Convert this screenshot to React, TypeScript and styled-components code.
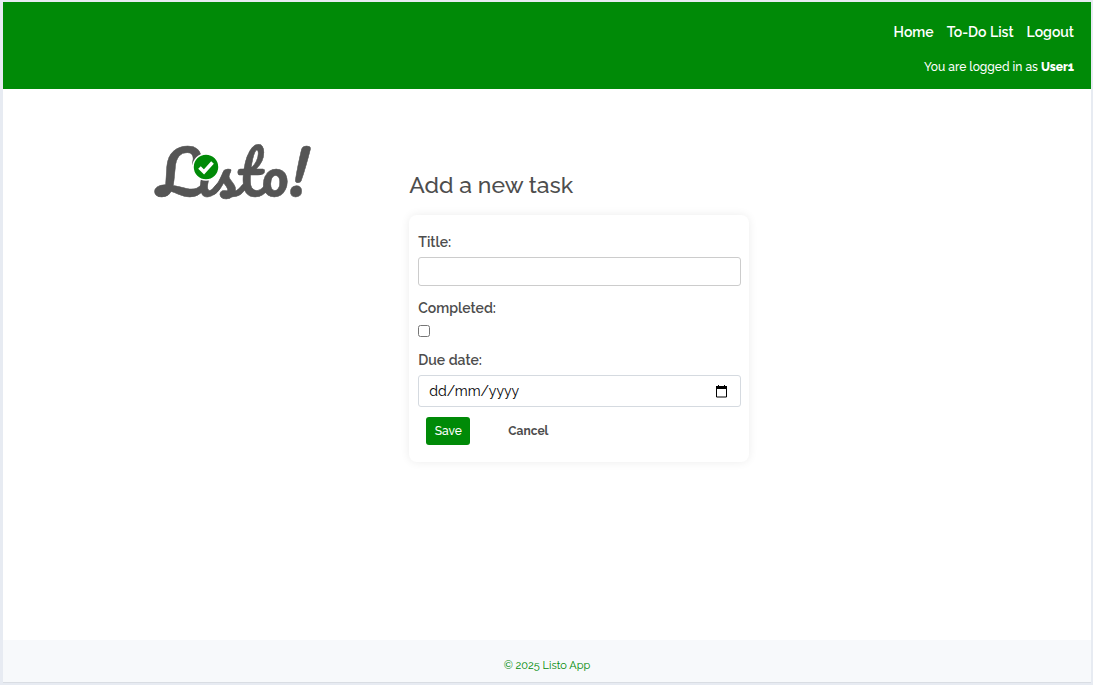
import React from "react";
import styled, { createGlobalStyle } from "styled-components";

const green = "#008a07";
const ink = "#4d4d4d";

const GlobalStyle = createGlobalStyle`
  * { box-sizing: border-box; }
  body {
    margin: 0;
    background: #e7ebf2;
    color: ${ink};
    font: 14px/20px Raleway, Lato, sans-serif;
  }
`;

const Page = styled.div`
  display: flex;
  flex-direction: column;
  min-height: 100vh;
  border: 2px solid #e7ebf2;
  border-left-width: 3px;
  background: #fff;
`;

const Header = styled.header`
  display: flex;
  flex-direction: column;
  align-items: flex-end;
  gap: 17px;
  padding: 20px 17px 13px;
  background: ${green};
  color: #fff;
`;

const Nav = styled.nav`
  display: flex;
  gap: 13px;
`;

const NavLink = styled.a`
  color: #fff;
  font-size: 14px;
  font-weight: 600;
  text-decoration: none;
`;

const Status = styled.p`
  margin: 0;
  font-size: 12px;
  line-height: 17px;
  font-weight: 500;

  b { font-weight: 800; }
`;

const Main = styled.main`
  flex: 1;
  display: grid;
  grid-template-columns: 254px minmax(0, 340px);
  align-items: start;
  padding: 52px 14%;
`;

const Logo = styled.svg`
  display: block;
  width: 170px;
  height: 72px;
  overflow: visible;
`;

const Wordmark = styled.text`
  fill: #555;
  stroke: #555;
  stroke-width: 0.5;
  font: 400 60px Pacifico, Lobster, "Dancing Script", cursive;
`;

const Content = styled.section`
  padding-top: 28px;
`;

const Heading = styled.h1`
  margin: 0 0 14px;
  font-size: 23px;
  line-height: 32px;
  font-weight: 500;
`;

const Card = styled.form`
  padding: 17px 8px 17px 9px;
  border-radius: 8px;
  box-shadow: 0 0 10px rgba(0, 0, 0, 0.08);
`;

const Fields = styled.div`
  display: flex;
  flex-direction: column;
  gap: 12px;
  margin-bottom: 10px;
`;

const Field = styled.div`
  display: flex;
  flex-direction: column;
  align-items: flex-start;
  gap: 5px;
`;

const Label = styled.label`
  font-size: 14px;
  line-height: 20px;
  font-weight: 600;
`;

const TextInput = styled.input`
  width: 100%;
  height: 29px;
  padding: 0 10px;
  border: 1px solid #ccc;
  border-radius: 3px;
  background: #fff;
  font: inherit;
`;

const Checkbox = styled.input`
  width: 12px;
  height: 12px;
  margin: 2px 0 1px;
`;

const DateBox = styled.div`
  display: flex;
  align-items: center;
  width: 100%;
  height: 32px;
  padding: 0 12px 0 10px;
  border: 1px solid #d5dae0;
  border-radius: 3px;
`;

const DateInput = styled.input`
  flex: 1;
  min-width: 0;
  padding: 0;
  border: 0;
  outline: 0;
  background: none;
  font: inherit;
  color: #000;
  &::placeholder { color: #000; opacity: 1; }
`;

const PickerButton = styled.button`
  display: flex;
  padding: 0;
  border: 0;
  background: none;
`;

const Actions = styled.div`
  display: flex;
  align-items: center;
  gap: 38px;
  padding: 0 8px;
`;

const SaveButton = styled.button`
  min-width: 44px;
  height: 28px;
  padding: 0 8px;
  border: 0;
  border-radius: 3px;
  background: ${green};
  color: #fff;
  font: inherit;
  font-size: 12px;
  font-weight: 500;
`;

const CancelLink = styled.a`
  color: ${ink};
  font-size: 12px;
  font-weight: 700;
  text-decoration: none;
`;

const Footer = styled.footer`
  padding: 17px 16px 7px;
  background: #f7f9fb;
  border-bottom: 1px solid #d9dde3;
  color: ${green};
  font-size: 11px;
  line-height: 18px;
  text-align: center;
`;

export default function App() {
  return (
    <>
      <GlobalStyle />
      <Page>
        <Header>
          <Nav>
            <NavLink href="#home">Home</NavLink>
            <NavLink href="#tasks">To-Do List</NavLink>
            <NavLink href="#logout">Logout</NavLink>
          </Nav>
          <Status>You are logged in as <b>User1</b></Status>
        </Header>
        <Main>
          <Logo viewBox="0 0 170 72" role="img" aria-label="Listo!">
            <Wordmark x="2" y="56">Listo!</Wordmark>
            <circle cx="51" cy="26" r="13" fill={green} stroke="#fff" strokeWidth="1.5" />
            <path d="M44.5 26.5l4.5 4.5 8.5-9.5" fill="none" stroke="#fff" strokeWidth="3.6" />
          </Logo>
          <Content>
            <Heading>Add a new task</Heading>
            <Card>
              <Fields>
                <Field>
                  <Label htmlFor="title">Title:</Label>
                  <TextInput id="title" type="text" />
                </Field>
                <Field>
                  <Label htmlFor="completed">Completed:</Label>
                  <Checkbox id="completed" type="checkbox" />
                </Field>
                <Field>
                  <Label htmlFor="due">Due date:</Label>
                  <DateBox>
                    <DateInput id="due" type="text" placeholder="dd/mm/yyyy" />
                    <PickerButton type="button" aria-label="Choose date">
                      <svg width="13" height="13" viewBox="0 0 13 13">
                        <path d="M1.5 1.5h10v10.5h-10z" fill="none" stroke="#000" />
                        <path d="M1 1h11v3H1zM3 0h1v1H3zM9 0h1v1H9z" />
                      </svg>
                    </PickerButton>
                  </DateBox>
                </Field>
              </Fields>
              <Actions>
                <SaveButton type="submit">Save</SaveButton>
                <CancelLink href="#tasks">Cancel</CancelLink>
              </Actions>
            </Card>
          </Content>
        </Main>
        <Footer>© 2025 Listo App</Footer>
      </Page>
    </>
  );
}
